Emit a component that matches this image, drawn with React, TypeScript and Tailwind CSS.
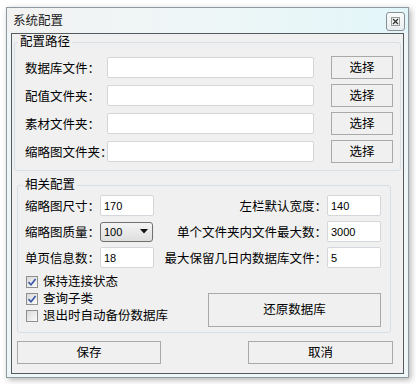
import React from "react";

const FONT = "font-['Liberation_Sans','Noto_Sans_CJK_SC',sans-serif]";

const TextBox = ({ value = "", className = "" }: { value?: string; className?: string }) => (
  <div
    className={`h-[21px] bg-white border border-[#d3d7dc] rounded-[2px] flex items-center pl-[3px] text-[11px] text-black ${className}`}
  >
    {value}
  </div>
);

const Button = ({ label, className = "" }: { label: string; className?: string }) => (
  <div
    className={`flex items-center justify-center border border-[#a9a9a9] bg-[#f0f0f0] text-[12.5px] text-black ${className}`}
  >
    {label}
  </div>
);

const CheckBox = ({ label, checked }: { label: string; checked?: boolean }) => (
  <div className="flex items-center h-[17px] gap-[5px]">
    <div className="w-[12px] h-[12px] border border-[#8e8f8f] bg-gradient-to-br from-[#d9d9d9] to-[#fbfbfb] flex items-center justify-center">
      {checked && (
        <svg width="10" height="10" viewBox="0 0 10 10">
          <path d="M1.5 5.2 L4 7.8 L8.6 2" fill="none" stroke="#3d5aa8" strokeWidth="1.7" />
        </svg>
      )}
    </div>
    <span>{label}</span>
  </div>
);

const PathRow = ({ label }: { label: string }) => (
  <div className="flex items-center h-[23px]">
    <span className="w-[82px] pt-[3px] whitespace-nowrap">{label}</span>
    <TextBox className="w-[207px]" />
    <Button label="选择" className="ml-[17px] w-[62px] h-[23px]" />
  </div>
);

const ConfigRow = ({
  left,
  right,
  rightValue,
  children,
}: {
  left: string;
  right: string;
  rightValue: string;
  children: React.ReactNode;
}) => (
  <div className="flex items-center h-[21px]">
    <span className="w-[75px] pt-[2px] whitespace-nowrap">{left}</span>
    {children}
    <span className="flex-1 text-right pt-[2px] whitespace-nowrap">{right}</span>
    <TextBox value={rightValue} className="w-[54px]" />
  </div>
);

export default function App() {
  return (
    <div className={`w-[416px] h-[384px] bg-white pl-[6px] pt-[7px] ${FONT} text-[12.5px] leading-[16px] text-black`}>
      <div className="w-[403px] h-[371px] border border-[#8d9aa2] bg-[#eef6f8] flex flex-col px-[4px] pb-[3px] shadow-[2px_2px_6px_rgba(0,0,0,0.3)]">
        {/* title bar */}
        <div className="h-[25px] flex items-start bg-gradient-to-r from-[#f2f2f2] via-[#eef6f7] to-[#e2f6f9] -mx-[4px] px-[4px]">
          <span className="pl-[2px] pt-[5px] text-[#1a1a1a]">系统配置</span>
          <div className="ml-auto -mr-[1px] mt-[4px] w-[19px] h-[19px] border border-[#8a8f94] rounded-[3px] bg-gradient-to-b from-[#fafafa] to-[#e8eef0] flex items-center justify-center">
            <svg width="9" height="9" viewBox="0 0 9 9">
              <rect x="0.5" y="0.5" width="8" height="8" fill="none" stroke="#9a9a9a" strokeWidth="1" />
              <path d="M2 2 L7 7 M7 2 L2 7" stroke="#333" strokeWidth="1.3" />
            </svg>
          </div>
        </div>

        {/* client area */}
        <div className="flex-1 border border-[#555a5e] bg-[#f0f0f0] flex flex-col">
          <fieldset className="mx-[2px] border border-[#d5dfe5] rounded-[3px] p-0">
            <legend className="ml-[3px] px-[2px] leading-[16px]">配置路径</legend>
            <div className="flex flex-col gap-[5px] pl-[10px] pt-[6px] pb-[7px]">
              <PathRow label="数据库文件：" />
              <PathRow label="配值文件夹：" />
              <PathRow label="素材文件夹：" />
              <PathRow label="缩略图文件夹：" />
            </div>
          </fieldset>

          <fieldset className="mt-[6px] ml-[5px] mr-[12px] border border-[#d5dfe5] rounded-[3px] p-0">
            <legend className="ml-[5px] px-[2px] leading-[16px]">相关配置</legend>
            <div className="pl-[7px] pr-[9px] pt-[2px] pb-[5px]">
              <div className="flex flex-col gap-[5px]">
                <ConfigRow left="缩略图尺寸：" right="左栏默认宽度：" rightValue="140">
                  <TextBox value="170" className="w-[54px]" />
                </ConfigRow>
                <ConfigRow left="缩略图质量：" right="单个文件夹内文件最大数：" rightValue="3000">
                  <div className="w-[53px] h-[20px] border border-[#707070] rounded-[3px] bg-gradient-to-b from-[#f4f4f4] to-[#dedede] flex items-center pl-[3px] pr-[4px] text-[11px]">
                    <span>100</span>
                    <svg className="ml-auto" width="8" height="5" viewBox="0 0 8 5">
                      <path d="M0 0 H8 L4 4.5 Z" fill="#111" />
                    </svg>
                  </div>
                </ConfigRow>
                <ConfigRow left="单页信息数：" right="最大保留几日内数据库文件：" rightValue="5">
                  <TextBox value="18" className="w-[54px]" />
                </ConfigRow>
              </div>
              <div className="flex items-start justify-between mt-[5px]">
                <div className="flex flex-col pl-[1px]">
                  <CheckBox label="保持连接状态" checked />
                  <CheckBox label="查询子类" checked />
                  <CheckBox label="退出时自动备份数据库" />
                </div>
                <Button label="还原数据库" className="mt-[20px] w-[173px] h-[34px]" />
              </div>
            </div>
          </fieldset>

          <div className="flex justify-between mt-[8px] ml-[5px] mr-[10px]">
            <Button label="保存" className="w-[144px] h-[23px]" />
            <Button label="取消" className="w-[145px] h-[23px]" />
          </div>
        </div>
      </div>
    </div>
  );
}
